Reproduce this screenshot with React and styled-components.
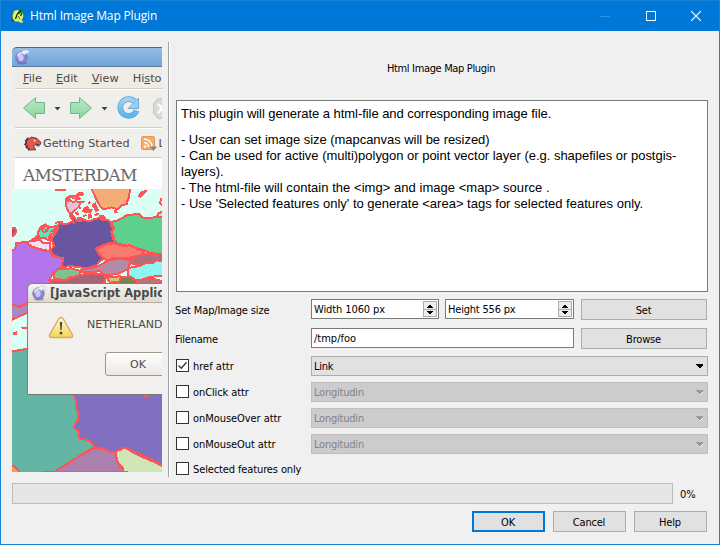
import React from "react";
import styled, { createGlobalStyle, css } from "styled-components";

const GlobalStyle = createGlobalStyle`
  * { box-sizing: border-box; }
  body { margin: 0; background: #f0f0f0; }
  button { font: inherit; color: inherit; }
  svg { flex: none; }
`;

const uiFont = '"DejaVu Sans Condensed", "DejaVu Sans", sans-serif';

const Window = styled.div`
  width: 720px;
  height: 545px;
  display: flex;
  flex-direction: column;
  background: #f0f0f0;
  border: 1px solid #1883d7;
  overflow: hidden;
  font: 11px/14px ${uiFont};
  font-stretch: condensed;
  color: #000;
`;

const TitleBar = styled.header`
  height: 30px;
  flex: none;
  display: flex;
  align-items: center;
  padding-left: 10px;
  background: #0078d7;
  color: #fff;
`;

const TitleText = styled.h1`
  flex: 1;
  margin: 0 0 0 5px;
  font: 400 12px/16px "Open Sans", sans-serif;
  letter-spacing: -0.15px;
`;

const CaptionButton = styled.span`
  width: 45.5px;
  height: 30px;
  display: flex;
  align-items: center;
  justify-content: center;
`;

const Body = styled.main`
  display: flex;
  height: 436px;
  margin-top: 11px;
  padding: 0 11px;
`;

const Preview = styled.section`
  position: relative;
  width: 150px;
  height: 425px;
  margin-top: 5px;
  flex: none;
  overflow: hidden;
  font: 12px/16px "DejaVu Sans", sans-serif;
  font-stretch: normal;
  color: #4a4a4a;
  white-space: nowrap;
`;

const Divider = styled.div`
  width: 2px;
  flex: none;
  margin: 0 6px 1px 6px;
  background: #a0a0a0;
  border-right: 1px solid #fff;
`;

const BrowserTitle = styled.div`
  height: 20px;
  padding: 1px 0 0 3px;
  border-top: 1px solid #5c6670;
  border-bottom: 1px solid #587ba0;
  border-top-left-radius: 5px;
  background: linear-gradient(#94bce5, #75a5d4);
`;

const BrowserChrome = styled.div`
  padding-left: 3px;
  background: #f0efec;
`;

const MenuBar = styled.div`
  height: 22px;
  display: flex;
  gap: 14px;
  padding: 4px 0 0 8px;
  background: #efece6;
  border-bottom: 1px solid #d4cdc4;
  font-size: 11.3px;
`;

const NavBar = styled.div`
  height: 39px;
  border-top: 1px solid #fff;
  border-bottom: 1px solid #d4cdc4;
`;

const BookmarkBar = styled.div`
  height: 30px;
  display: flex;
  align-items: center;
  border-top: 1px solid #fff;
  border-bottom: 1px solid #d4cdc4;
  padding: 1px 0 0 9px;
  font-size: 11.2px;
`;

const BookmarkText = styled.span`
  margin: 0 11px 0 1px;
`;

const PageHeading = styled.div`
  height: 31px;
  margin-left: 3px;
  padding: 5px 0 0 8px;
  background: #fff;
  font: 17px/24px "DejaVu Serif", serif;
  letter-spacing: -0.85px;
  color: #686868;
`;

const MapDrawing = styled.svg`
  display: block;
`;

const Alert = styled.div`
  position: absolute;
  left: 15px;
  top: 236px;
  width: 160px;
  height: 112px;
  border: 1px solid #858078;
  border-bottom: 1px solid #777;
  border-top-left-radius: 6px;
  background: #f1f0ec;
`;

const AlertTitle = styled.div`
  height: 19px;
  display: flex;
  align-items: center;
  gap: 3px;
  padding-left: 4px;
  border-bottom: 1px solid #b5aea4;
  border-top-left-radius: 5px;
  background: linear-gradient(#f6f5f2, #dedad2);
  font: bold 11.4px/18px "DejaVu Sans", sans-serif;
`;

const AlertBody = styled.div`
  display: flex;
  gap: 13px;
  padding: 13px 0 0 20px;
  font-size: 11px;
`;

const AlertText = styled.span`
  padding-top: 1px;
`;

const AlertButton = styled.div`
  width: 90px;
  height: 24px;
  margin: 13px 0 0 77px;
  padding: 4px 0 0 24px;
  border: 1px solid #9e978e;
  border-radius: 3px;
  background: linear-gradient(#fff, #ebe9e5);
  font-size: 11px;
`;

const Form = styled.section`
  flex: 1;
  display: flex;
  flex-direction: column;
`;

const Heading = styled.h2`
  height: 58px;
  flex: none;
  margin: 0;
  padding: 20px 2px 0 0;
  font: inherit;
  text-align: center;
  letter-spacing: -0.34px;
`;

const Description = styled.div`
  height: 192px;
  flex: none;
  padding: 5px 4px;
  border: 1px solid #7a7a7a;
  background: #fff;
  font: 13px/16px "Liberation Sans", Arial, sans-serif;
`;

const Paragraph = styled.p`
  margin: 0 0 10px;
`;

const Line = styled.span`
  display: block;
  white-space: nowrap;
  letter-spacing: ${(p) => p.$track || 0}px;
`;

const Row = styled.div`
  display: grid;
  grid-template-columns: 135px 1fr;
  height: 20px;
  flex: none;
  margin-top: ${(p) => p.$gap}px;
`;

const Label = styled.label`
  display: flex;
  align-items: center;
  gap: 4px;
  height: 20px;
  white-space: nowrap;
  margin-left: ${(p) => (p.$outdent ? -1 : 0)}px;
  padding-top: ${(p) => (p.$outdent ? 3 : 2)}px;
  letter-spacing: ${(p) => p.$track || 0}px;
`;

const CheckBox = styled.span`
  width: 13px;
  height: 13px;
  flex: none;
  display: flex;
  border: 1px solid #333;
  background: #fff;
  margin-top: -3px;
`;

const Fields = styled.div`
  display: grid;
  grid-template-columns: ${(p) => p.$columns};
  column-gap: 6px;
`;

const box = css`
  height: 20px;
  border: 1px solid #7a7a7a;
  background: #fff;
  padding: 1px 2px 0 2px;
  display: flex;
  align-items: center;
  justify-content: space-between;
`;

const TextField = styled.div`
  ${box}
  padding-top: 2px;
  letter-spacing: ${(p) => p.$track || 0}px;
`;

const Stepper = styled.span`
  width: 14px;
  height: 16px;
  margin: -2px -1px 0 0;
  display: grid;
  place-items: center;
  border: 1px solid #acacac;
  background: #ececec;
`;

const Combo = styled.div`
  ${box}
  padding-right: 3px;
  border-color: ${(p) => (p.$disabled ? "#bfbfbf" : "#adadad")};
  background: ${(p) => (p.$disabled ? "#cccccc" : "#e1e1e1")};
  color: ${(p) => (p.$disabled ? "#838383" : "#000")};
  letter-spacing: -0.22px;
`;

const Button = styled.button`
  width: ${(p) => p.$width}px;
  height: 21px;
  margin-left: ${(p) => p.$indent || 0}px;
  padding: ${(p) => (p.$primary ? 2 : 3)}px 1px 0 0;
  border: ${(p) => (p.$primary ? "2px solid #0078d7" : "1px solid #adadad")};
  background: #e1e1e1;
  letter-spacing: -0.2px;
  line-height: 14px;
`;

const ProgressRow = styled.div`
  display: flex;
  align-items: center;
  gap: 7px;
  height: 21px;
  flex: none;
  margin: 5px 11px 0;
`;

const ProgressTrack = styled.div`
  width: 661px;
  height: 21px;
  border: 1px solid #bcbcbc;
  background: #e6e6e6;
`;

const ProgressText = styled.span`
  padding-top: 2px;
`;

const Actions = styled.footer`
  display: flex;
  justify-content: flex-end;
  gap: 8px;
  margin: 7px 12px 0 0;
`;

function AppIcon() {
  return (
    <svg width="14" height="16" viewBox="0 0 14 16">
      <path d="M6.500 2C3 2 1.200 5 1.200 8s1.800 5.500 4.300 5.500H7.500l3 1.500 2-1.200-2-1.500c2-2 2.300-5.300 1-7.500z" fill="#e9ee63" />
      <path d="M2.500 4.500C.8 6 .5 9 1.500 11M7 8l2 3" stroke="#2c6b25" strokeWidth="1" fill="none" />
      <path d="M6 5.500 9 1.500l4-1L11.500 4 8 6z" fill="#138326" />
      <path d="M4.500 11 6 6.500 10 2.500M1 13l2-1M9.500 8l1.500-3" stroke="#06351a" strokeWidth="1.300" fill="none" />
    </svg>
  );
}

function Globe() {
  return (
    <svg width="15" height="16" viewBox="0 0 15 16">
      <ellipse cx="7" cy="14" rx="5" ry="1.500" fill="#53698d" opacity=".5" />
      <circle cx="6.500" cy="8.500" r="5.800" fill="#8b85d4" stroke="#6863ae" strokeWidth=".6" />
      <ellipse cx="6" cy="8.500" rx="2.600" ry="3.600" fill="#c9cafa" />
      <path d="M2 6c1-2.500 3-3 5-3L6 5 4 6 3 9z" fill="#dfe1ff" />
      <path d="M6 4c1-3 5-4 8-2l-1 3-2-1-1 2z" fill="#eef0f5" stroke="#a9b4c8" strokeWidth=".4" />
    </svg>
  );
}

function NavIcons() {
  return (
    <svg width="147" height="37" viewBox="15 90 147 37" display="block">
      <defs>
        <linearGradient id="green" x1="0" y1="0" x2="0" y2="1">
          <stop offset="0" stopColor="#bdebc9" /><stop offset="1" stopColor="#88d49b" />
        </linearGradient>
        <linearGradient id="blue" x1="0" y1="0" x2="0" y2="1">
          <stop offset="0" stopColor="#a5d2f2" /><stop offset="1" stopColor="#57b7ef" />
        </linearGradient>
      </defs>
      <g fill="url(#green)" stroke="#6fb987" strokeLinejoin="round">
        <path d="M23.500 108 35.500 97.500V102.500H44.500V113.500H35.500V118.500Z" />
        <path d="M91.500 108 79.500 97.500V102.500H70.500V113.500H79.500V118.500Z" />
      </g>
      <path d="M54.500 107h6l-3 3.500zM101.500 107h6l-3 3.500z" fill="#444" />
      <path d="M134.500 101.500A8.400 8.400 0 1 0 136.500 110.500" fill="none" stroke="#5b9fd2" strokeWidth="5.600" />
      <path d="M138.500 98v10.500H128z" fill="#9bcfef" stroke="#5b9fd2" strokeWidth=".8" />
      <path d="M134.500 101.500A8.400 8.400 0 1 0 136.300 111" fill="none" stroke="url(#blue)" strokeWidth="4.200" />
      <path d="M153.500 103.500 158 98.500H166V118.500H158L153.500 113Z" fill="#d9d9d7" stroke="#c4c4c1" />
      <path d="m158 104 7 7m-7 2 5-6" stroke="#fff" strokeWidth="2.500" />
    </svg>
  );
}

function DinoIcon() {
  return (
    <svg width="18" height="15" viewBox="0 0 17 14">
      <path d="M1.500 7 3 3.500 7 1l5 1 4 4-1 2.500-4-1-2 2 2 3.500H5L2 10.500z" fill="#e45750" stroke="#54302e" strokeWidth=".9" />
      <path d="M1 5 4 1.500M.5 8.500l2-3M2 11.500l1.500-2.500M4 13.500l1-2" stroke="#3f2826" strokeWidth="1.300" />
      <path d="M11 8.500l3.500 1" stroke="#54302e" />
      <circle cx="10" cy="4.200" r=".8" fill="#fff" />
    </svg>
  );
}

function FeedIcon() {
  return (
    <svg width="17" height="16" viewBox="0 0 17 16">
      <rect x=".5" y=".5" width="13" height="13" rx="1.500" fill="#f3ab67" stroke="#e39a58" />
      <circle cx="4" cy="10.500" r="1.300" fill="#fff" />
      <path d="M3 6.500a4.500 4.500 0 0 1 4.500 4.500M3 3a8 8 0 0 1 8 8" fill="none" stroke="#fff" strokeWidth="1.500" />
      <path d="M9 10.500h7l-3.500 4.500z" fill="#82827f" />
    </svg>
  );
}

function WarningIcon() {
  return (
    <svg width="26" height="23" viewBox="0 0 26 23">
      <defs>
        <linearGradient id="warn" x1="0" y1="0" x2="0" y2="1">
          <stop offset="0" stopColor="#fffbe0" /><stop offset="1" stopColor="#f3d64d" />
        </linearGradient>
      </defs>
      <path d="M11 2.500Q13 .5 15 2.500L24.500 19Q25 21.500 23 21.500H3Q1 21.500 1.500 19Z" fill="url(#warn)" stroke="#d9a878" strokeWidth="1.400" />
      <path d="M11.800 6h2.400l-.6 8h-1.200z" fill="#4f4b3c" />
      <circle cx="13" cy="17" r="1.500" fill="#4f4b3c" />
    </svg>
  );
}

const regions = [
  ["#b375ec", "30,212 46,207 48,190 75,186 90,198 130,213 150,214 158,228 190,235 184,262 160,278 148,300 180,330 84,368 60,380 30,371"],
  ["#a98bbb", "30,371 60,380 90,368 90,396 60,408 30,422"],
  ["#64b5a3", "30,516 60,510 90,506 230,620 224,645 229,665 228,685 235,700 233,720 221,742 238,757 238,775 270,782 284,800 215,842 163,876 62,880 36,857 20,850"],
  ["#fa9a5f", "30,855 42,858 62,880 30,880"],
  ["#8070bf", "221,640 500,640 500,862 440,832 374,803 346,815 330,815 304,805 284,801 270,782 238,775 238,757 221,742 233,720 235,700 228,685 229,665"],
  ["#ac80ae", "163,876 215,842 284,802 304,805 330,815 346,815 352,845 371,876"],
  ["#d0e6b8", "346,815 374,803 420,828 460,845 500,864 500,890 371,876 368,864 352,845"],
  ["#6857a0", "155,178 162,165 174,148 172,136 180,130 200,133 212,126 222,128 210,108 218,106 232,124 252,120 270,124 282,118 298,114 306,121 325,121 333,130 334,140 340,146 334,156 338,172 344,187 318,192 287,206 296,222 314,237 302,240 290,255 274,260 262,266 240,262 212,258 184,262 190,235 172,230 155,221 154,208 162,198"],
  ["#5dd08d", "334,126 356,120 380,106 416,101 426,112 440,114 500,109 500,222 452,220 430,210 390,198 356,192 344,183 340,168 335,156 342,145"],
  ["#f87b70", "287,206 300,202 318,194 340,190 370,198 390,196 410,206 433,216 420,226 385,234 340,234 322,242 306,230"],
  ["#b58aa6", "242,270 290,260 325,242 358,235 392,242 384,268 352,282 316,286 300,274 242,277"],
  ["#ad6e80", "392,242 402,231 440,222 500,220 500,240 460,248 420,257 398,252"],
  ["#8ef5f2", "384,264 420,258 440,248 460,248 470,241 500,245 500,288 450,290 420,302 400,298 384,285"],
  ["#7bc48e", "160,284 172,268 214,265 238,272 242,288 210,292 196,300 162,296"],
  ["#a66575", "150,300 196,300 240,285 276,280 316,284 316,306 260,330 160,330"],
  ["#cbcc72", "320,292 362,289 362,304 330,308"],
  ["#78834e", "362,292 392,290 418,308 410,330 350,330"],
  ["#b57678", "412,302 450,293 480,302 500,310 500,330 410,330"],
  ["#f5ad75", "272,20 280,38 290,60 302,82 310,88 334,82 352,88 366,76 382,72 382,62 388,52 388,42 392,20"],
  ["#eac1d7", "198,78 198,64 210,60 218,66 228,64 242,66 237,80 222,94 214,100 206,97"],
  ["#f3e0f6", "75,186 120,180 130,190 150,190 150,214 124,208 98,201"],
  ["#66e0b6", "114,158 122,140 132,138 150,142 168,138 166,158 150,166 144,180 130,172 118,176"],
  ["#9e5768", "24,142 46,145 48,156 40,169 24,171"],
  ["#b4e7e1", "470,110 476,100 500,90 500,110"],
];

const islands = [
  "198,62 194,54 212,44 226,44 236,36 252,38 250,46 236,50 246,58 228,60 214,54",
  "246,62 256,62 250,70 242,70",
  "250,84 262,78 270,88 280,86 274,98 258,100 246,94",
  "274,74 288,66 290,78 298,90 288,98 282,88",
  "340,92 348,88 354,98 344,99",
  "160,20 202,20 198,32 166,32",
  "262,104 272,100 278,112 266,118",
  "298,104 310,106 320,114 312,122 296,114",
  "232,112 244,110 254,118 242,124 230,120",
  "208,98 218,100 216,110 206,108",
  "224,96 234,94 238,104 228,104",
  "120,138 136,130 148,138 144,156 130,160 120,150",
  "86,184 104,170 116,158 120,174 104,184",
  "144,180 152,168 162,172 154,186",
  "38,458 50,454 50,464 40,466",
  "62,440 82,440 82,448 68,448",
];

const coasts = "M236 76 242 88M250 110 258 104M284 106 296 100M264 72 270 66M484 54 480 70 490 78M150 156 164 150 172 138M36 515 60 510 84 506M224 645 240 645M428 646 450 648M164 128 190 126";

function MapImage() {
  return (
    <MapDrawing width="150" height="283" viewBox="36 27 450 849" shapeRendering="crispEdges">
      <rect x="36" y="27" width="450" height="849" fill="#dcfff5" />
      <g stroke="#fc5457" strokeWidth="6" strokeLinejoin="round">
        {regions.map(([fill, points], i) => <polygon key={i} fill={fill} points={points} />)}
        <path d="M416 48 424 38 438 32 430 42 421 50z" fill="#f5ad75" />
      </g>
      <g fill="#fc5457">
        {islands.map((points, i) => <polygon key={i} points={points} />)}
      </g>
      <path d="M128 148h6v5h-6zM136 142h4v4h-4zM220 51h8v3h-8z" fill="#66e0b6" />
      <path d={coasts} fill="none" stroke="#fc5457" strokeWidth="6" />
    </MapDrawing>
  );
}

const Arrow = ({ faded }) => (
  <svg width="9" height="7" viewBox="0 0 9 7" shapeRendering="crispEdges">
    {faded && <path d="M4 6 8 2v2L5 6z" fill="#fff" />}
    <path d="M1 1h7v1L5 5H4L1 2z" fill={faded ? "#9a9a9a" : "#000"} />
  </svg>
);

const SpinBox = ({ children, track }) => (
  <TextField $track={track}>
    {children}
    <Stepper>
      <svg width="12" height="14" viewBox="0 0 12 14" shapeRendering="crispEdges">
        <path d="M5 3h2v1h1v1h1v1H3V5h1V4h1zM3 9h6v1H8v1H7v1H5v-1H4v-1H3z" fill="#000" />
        <path d="M0 7.500h12" stroke="#acacac" />
      </svg>
    </Stepper>
  </TextField>
);

const attributes = [
  { name: "href attr", value: "Link", checked: true, gap: 8, track: 0 },
  { name: "onClick attr", value: "Longitudin", gap: 6, track: -0.1 },
  { name: "onMouseOver attr", value: "Longitudin", gap: 6, track: -0.06 },
  { name: "onMouseOut attr", value: "Longitudin", gap: 6, track: -0.06 },
];

const Check = ({ checked }) => (
  <CheckBox>
    {checked && (
      <svg width="11" height="11" viewBox="0 0 11 11">
        <path d="m1.500 5.500 2.800 2.800 5.200-6" fill="none" stroke="#333" strokeWidth="1.300" />
      </svg>
    )}
  </CheckBox>
);

export default function App() {
  return (
    <>
      <GlobalStyle />
      <Window>
        <TitleBar>
          <AppIcon />
          <TitleText>Html Image Map Plugin</TitleText>
          <CaptionButton><svg width="10" height="10"><path d="M0 5.500h10" stroke="#3193df" /></svg></CaptionButton>
          <CaptionButton><svg width="10" height="10"><rect x=".5" y=".5" width="9" height="9" fill="none" stroke="#fff" /></svg></CaptionButton>
          <CaptionButton><svg width="10" height="10"><path d="m0 0 10 10M10 0 0 10" stroke="#fff" strokeWidth="1.200" /></svg></CaptionButton>
        </TitleBar>
        <Body>
          <Preview>
            <BrowserTitle><Globe /></BrowserTitle>
            <BrowserChrome>
              <MenuBar>
                <span><u>F</u>ile</span><span><u>E</u>dit</span><span><u>V</u>iew</span><span>Hi<u>s</u>tory</span>
              </MenuBar>
              <NavBar><NavIcons /></NavBar>
              <BookmarkBar><DinoIcon /><BookmarkText>Getting Started</BookmarkText><FeedIcon /><BookmarkText>L</BookmarkText></BookmarkBar>
            </BrowserChrome>
            <PageHeading>AMSTERDAM</PageHeading>
            <MapImage />
            <Alert>
              <AlertTitle><Globe />[JavaScript Applic</AlertTitle>
              <AlertBody><WarningIcon /><AlertText>NETHERLANDS</AlertText></AlertBody>
              <AlertButton>OK</AlertButton>
            </Alert>
          </Preview>
          <Divider />
          <Form>
            <Heading>Html Image Map Plugin</Heading>
            <Description>
              <Paragraph><Line $track={-0.05}>This plugin will generate a html-file and corresponding image file.</Line></Paragraph>
              <Line $track={-0.04}>- User can set image size (mapcanvas will be resized)</Line>
              <Line $track={-0.02}>- Can be used for active (multi)polygon or point vector layer (e.g. shapefiles or postgis-</Line>
              <Line>layers).</Line>
              <Line $track={0.04}>- The html-file will contain the &lt;img&gt; and image &lt;map&gt; source .</Line>
              <Line>- Use 'Selected features only' to generate &lt;area&gt; tags for selected features only.</Line>
            </Description>
            <Row $gap={7}>
              <Label $outdent $track={-0.14}>Set Map/Image size</Label>
              <Fields $columns="128px 129px 127px">
                <SpinBox track={-0.1}>Width 1060 px</SpinBox>
                <SpinBox track={-0.2}>Height 556 px</SpinBox>
                <Button $width={126} $indent={1}>Set</Button>
              </Fields>
            </Row>
            <Row $gap={9}>
              <Label $outdent $track={-0.2}>Filename</Label>
              <Fields $columns="263px 127px">
                <TextField>/tmp/foo</TextField>
                <Button $width={126} $indent={1}>Browse</Button>
              </Fields>
            </Row>
            {attributes.map((a) => (
              <Row key={a.name} $gap={a.gap}>
                <Label $track={a.track}><Check checked={a.checked} />{a.name}</Label>
                <Combo $disabled={!a.checked}>{a.value}<Arrow faded={!a.checked} /></Combo>
              </Row>
            ))}
            <Row $gap={5}>
              <Label $track={-0.12}><Check />Selected features only</Label>
            </Row>
          </Form>
        </Body>
        <ProgressRow><ProgressTrack /><ProgressText>0%</ProgressText></ProgressRow>
        <Actions>
          <Button $width={73} $primary>OK</Button>
          <Button $width={73}>Cancel</Button>
          <Button $width={73}>Help</Button>
        </Actions>
      </Window>
    </>
  );
}
